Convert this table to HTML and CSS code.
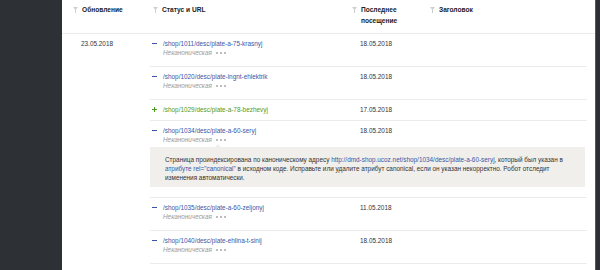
FILE: index.html
```html
<!DOCTYPE html>
<html lang="ru">
<head>
<meta charset="utf-8">
<link rel="stylesheet" href="styles.css">
</head>
<body>
<div class="page">
  <aside class="sidebar"></aside>
  <main class="main">
    <div class="thead">
      <div class="th th-date"><svg class="funnel" viewBox="0 0 5 6"><polygon points="0,0 5,0 3,2.4 3,6 2,6 2,2.4"/></svg><span>Обновление</span></div>
      <div class="th th-status"><svg class="funnel" viewBox="0 0 5 6"><polygon points="0,0 5,0 3,2.4 3,6 2,6 2,2.4"/></svg><span>Статус и URL</span></div>
      <div class="th th-visit"><svg class="funnel" viewBox="0 0 5 6"><polygon points="0,0 5,0 3,2.4 3,6 2,6 2,2.4"/></svg><span class="wrap">Последнее посещение</span></div>
      <div class="th th-title"><svg class="funnel" viewBox="0 0 5 6"><polygon points="0,0 5,0 3,2.4 3,6 2,6 2,2.4"/></svg><span>Заголовок</span></div>
    </div>
    <div class="tbody">
      <div class="date-cell">23.05.2018</div>
      <div class="group">
        <div class="row">
          <div class="status"><div class="url"><span class="sign minus"></span><a href="#">/shop/1011/desc/plate-a-75-krasnyj</a></div><div class="sub">Неканоническая <span class="more"><i></i><i></i><i></i></span></div></div>
          <div class="visit">18.05.2018</div>
          <div class="title"></div>
        </div>
        <div class="row">
          <div class="status"><div class="url"><span class="sign minus"></span><a href="#">/shop/1020/desc/plate-ingnt-ehlektrik</a></div><div class="sub">Неканоническая <span class="more"><i></i><i></i><i></i></span></div></div>
          <div class="visit">18.05.2018</div>
          <div class="title"></div>
        </div>
        <div class="row">
          <div class="status"><div class="url"><span class="sign plus"></span><a href="#" class="green">/shop/1029/desc/plate-a-78-bezhevyj</a></div></div>
          <div class="visit">17.05.2018</div>
          <div class="title"></div>
        </div>
        <div class="row">
          <div class="status"><div class="url"><span class="sign minus"></span><a href="#">/shop/1034/desc/plate-a-60-seryj</a></div><div class="sub">Неканоническая <span class="more"><i></i><i></i><i></i></span></div></div>
          <div class="visit">18.05.2018</div>
          <div class="title"></div>
          <div class="callout">Страница проиндексирована по каноническому адресу <a href="#">http://dmd-shop.ucoz.net/shop/1034/desc/plate-a-60-seryj</a>, который был указан в <a href="#">атрибуте rel="canonical"</a> в исходном коде. Исправьте или удалите атрибут canonical, если он указан некорректно. Робот отследит изменения автоматически.</div>
        </div>
        <div class="row">
          <div class="status"><div class="url"><span class="sign minus"></span><a href="#">/shop/1035/desc/plate-a-60-zeljonyj</a></div><div class="sub">Неканоническая <span class="more"><i></i><i></i><i></i></span></div></div>
          <div class="visit">11.05.2018</div>
          <div class="title"></div>
        </div>
        <div class="row">
          <div class="status"><div class="url"><span class="sign minus"></span><a href="#">/shop/1040/desc/plate-ehlina-t-sinij</a></div><div class="sub">Неканоническая <span class="more"><i></i><i></i><i></i></span></div></div>
          <div class="visit">18.05.2018</div>
          <div class="title"></div>
        </div>
      </div>
    </div>
  </main>
  <aside class="edge"></aside>
</div>
</body>
</html>
```
FILE: styles.css
```css
* { box-sizing: border-box; }
html, body {
  margin: 0;
  padding: 0;
  width: 600px;
  height: 270px;
  overflow: hidden;
  background: #fff;
  font-family: "Liberation Sans", Arial, sans-serif;
  font-size: 6.4px;
  color: #333;
}
.page {
  display: flex;
  height: 270px;
}
.sidebar {
  width: 62px;
  flex: none;
  background: #2d3035;
}
.edge {
  width: 5px;
  flex: none;
  background: #2c2f34;
  border-left: 1px solid #55585c;
}
.main {
  flex: 1;
  min-width: 0;
  background: #fff;
}
.thead {
  display: grid;
  grid-template-columns: 88px 202px 78px 1fr;
  height: 34px;
  border-bottom: 1px solid #ececec;
}
.th {
  display: flex;
  align-items: flex-start;
  padding-top: 4px;
  font-weight: bold;
  color: #222;
  line-height: 11px;
  font-size: 6.6px;
}
.th-date { padding-left: 11px; }
.th-status { padding-left: 3px; }
.funnel {
  width: 5px;
  height: 6px;
  flex: none;
  margin-top: 3px;
  margin-right: 4px;
  fill: #cfcfcf;
}
.wrap { max-width: 55px; }
.tbody {
  display: grid;
  grid-template-columns: 88px 1fr;
}
.date-cell {
  padding: 5px 0 0 19px;
  line-height: 9px;
}
.row {
  display: grid;
  grid-template-columns: 202px 78px 1fr;
  margin-right: 8px;
  border-bottom: 1px solid #ececec;
  padding-top: 5px;
  padding-bottom: 6px;
  line-height: 9px;
}
.status { padding-left: 2px; }
.url { display: flex; align-items: center; height: 9px; }
.url a { color: #3857a6; text-decoration: none; }
.url a.green { color: #4f9a25; }
.sign {
  width: 11px;
  height: 9px;
  flex: none;
  position: relative;
}
.sign::before {
  content: "";
  position: absolute;
  left: 0;
  top: 4px;
  width: 5px;
  height: 1px;
  background: #3857a6;
}
.plus::before { background: #4f9a25; }
.plus::after {
  content: "";
  position: absolute;
  left: 2px;
  top: 2px;
  width: 1px;
  height: 5px;
  background: #4f9a25;
}
.sub {
  padding-left: 11px;
  margin-bottom: 3px;
  font-style: italic;
  color: #9a9a9a;
  height: 9px;
}
.more {
  display: inline-flex;
  gap: 2px;
  margin-left: 2px;
  vertical-align: middle;
}
.more i {
  width: 2px;
  height: 2px;
  border-radius: 50%;
  background: #a8a8a8;
}
.visit { padding-left: 8px; }
.callout {
  grid-column: 1 / -1;
  position: relative;
  margin: 0 2px 4px 0;
  height: 40px;
  padding: 8px 20px 5px 15px;
  background: #f0efec;
  color: #333;
  line-height: 9px;
}
.callout::before {
  content: "";
  position: absolute;
  left: 65px;
  top: -3px;
  border-left: 3px solid transparent;
  border-right: 3px solid transparent;
  border-bottom: 3px solid #f0efec;
}
.callout a { color: #3857a6; text-decoration: none; }
```
